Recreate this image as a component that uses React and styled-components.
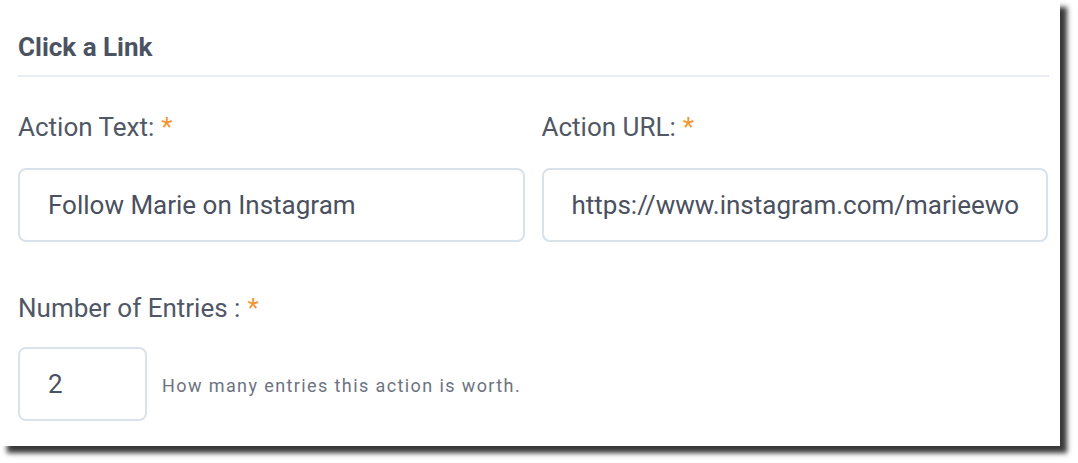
import React from "react";
import styled, { createGlobalStyle } from "styled-components";

const Global = createGlobalStyle`
  html, body { margin: 0; padding: 0; background: #ffffff; }
  body { font-family: Roboto, "Liberation Sans", sans-serif; }
  * { box-sizing: border-box; }
`;

const Page = styled.div`
  width: 1078px;
  height: 463px;
  overflow: hidden;
`;

const Card = styled.div`
  width: 1060px;
  height: 446px;
  background: #ffffff;
  box-shadow: 7px 7px 5px rgba(30, 30, 30, 0.88);
  padding: 32px 11px 0 18px;
  display: flex;
  flex-direction: column;
`;

const Title = styled.h2`
  margin: 0;
  font-size: 26px;
  line-height: 30px;
  font-weight: 700;
  color: #4b5262;
  padding-bottom: 13px;
  border-bottom: 2px solid #e9ecf0;
`;

const Row = styled.div`
  display: grid;
  grid-template-columns: minmax(0, 1fr) minmax(0, 1fr);
  column-gap: 17px;
  margin-top: 35px;
  margin-right: 1px;
`;

const Field = styled.div`
  display: flex;
  flex-direction: column;
  min-width: 0;
`;

const Label = styled.label`
  font-size: 26px;
  line-height: 30px;
  color: #505766;
  margin-bottom: ${(p) => p.$gap || 26}px;
`;

const Star = styled.span`
  color: #f39533;
  margin-left: 7px;
`;

const Input = styled.div`
  height: 74px;
  width: ${(p) => p.$width || "auto"};
  flex-shrink: 0;
  border: 2px solid #d9e1ea;
  border-radius: 8px;
  padding: 0 28px;
  display: flex;
  align-items: center;
  font-size: 26px;
  color: #4a5060;
  white-space: nowrap;
  overflow: hidden;
`;

const Entries = styled.div`
  margin-top: 51px;
  display: flex;
  flex-direction: column;
`;

const InlineRow = styled.div`
  display: flex;
  align-items: center;
  gap: 15px;
`;

const Help = styled.span`
  font-size: 18px;
  letter-spacing: 1.4px;
  color: #6d7380;
  padding-top: 3px;
`;

export default function App() {
  return (
    <Page>
      <Global />
      <Card>
        <Title>Click a Link</Title>
        <Row>
          <Field>
            <Label>
              Action Text:<Star>*</Star>
            </Label>
            <Input>Follow Marie on Instagram</Input>
          </Field>
          <Field>
            <Label>
              Action URL:<Star>*</Star>
            </Label>
            <Input>https://www.instagram.com/marieewo</Input>
          </Field>
        </Row>
        <Entries>
          <Label $gap={24}>
            Number of Entries :<Star>*</Star>
          </Label>
          <InlineRow>
            <Input $width="129px">2</Input>
            <Help>How many entries this action is worth.</Help>
          </InlineRow>
        </Entries>
      </Card>
    </Page>
  );
}
